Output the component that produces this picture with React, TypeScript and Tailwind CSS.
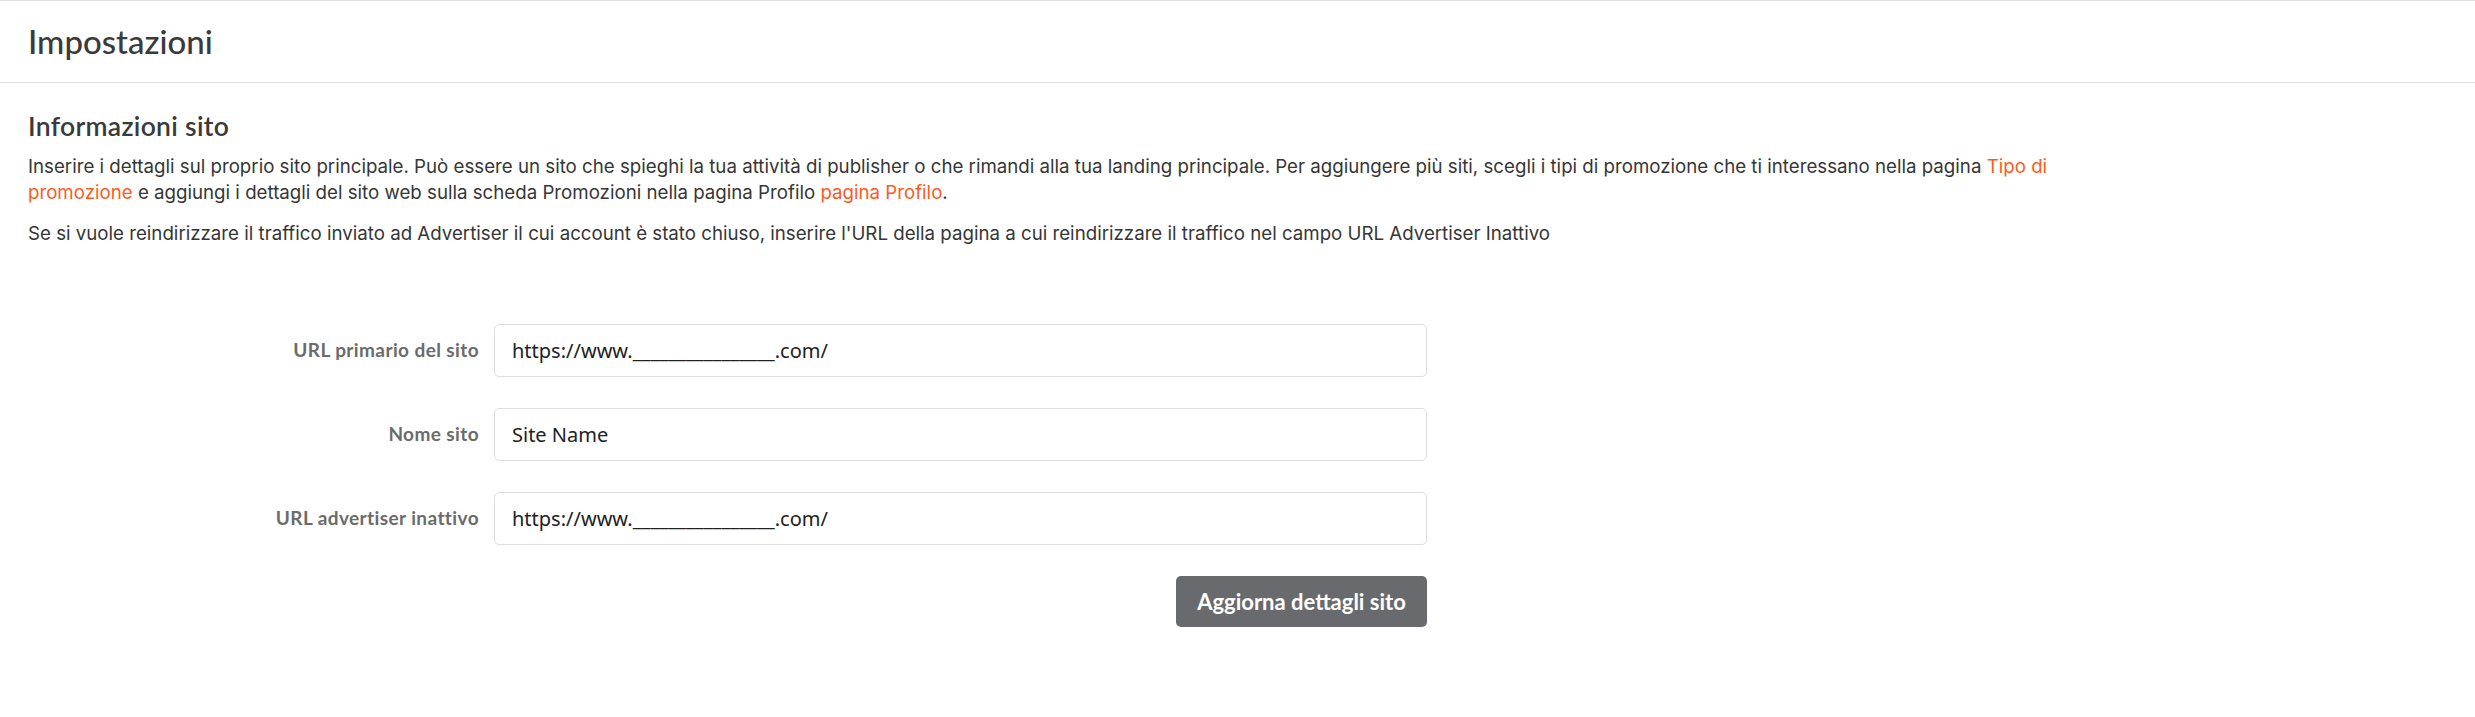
import React from "react";

const inputCls =
  "box-border h-[53px] rounded-[5px] border border-[#dedede] bg-white pl-[17px] flex items-center text-[20px] text-[#222] font-['Noto_Sans',sans-serif]";
const labelCls = "text-right text-[19px] tracking-[0.4px] font-bold text-[#6b6b6b]";

export default function App() {
  return (
    <div className="w-full min-h-[717px] bg-white font-['Lato','Open_Sans',sans-serif] text-[#333]">
      <div className="box-border h-[83px] border-t border-b border-t-[#e3e3e3] border-b-[#dedede] px-[28px] pt-[21px]">
        <h1 className="text-[33px] leading-[38px] font-medium text-[#3a3a3a]">Impostazioni</h1>
      </div>
      <div className="px-[28px] pt-[28px]">
        <h2 className="text-[26.5px] leading-[30px] tracking-[0.3px] font-semibold text-[#3a3a3a]">Informazioni sito</h2>
        <div className="font-['Inter',sans-serif] text-[18.7px] leading-[26px] text-[#363636]">
          <p className="mt-[13px] max-w-[2060px]">
            Inserire i dettagli sul proprio sito principale. Può essere un sito che spieghi la tua attività di publisher o che rimandi alla tua landing principale. Per aggiungere più siti, scegli i tipi di promozione che ti interessano nella pagina{" "}
            <a className="text-[#ff5a1e]">Tipo di promozione</a> e aggiungi i dettagli del sito web sulla scheda Promozioni nella pagina Profilo{" "}
            <a className="text-[#ff5a1e]">pagina Profilo</a>.
          </p>
          <p className="mt-[15px]">
            Se si vuole reindirizzare il traffico inviato ad Advertiser il cui account è stato chiuso, inserire l'URL della pagina a cui reindirizzare il traffico nel campo URL Advertiser Inattivo
          </p>
        </div>

        <div className="mt-[77px] grid grid-cols-[451px_933px] gap-x-[15px] gap-y-[31px] items-center">
          <label className={labelCls}>URL primario del sito</label>
          <div className={inputCls}>https://www.________________.com/</div>
          <label className={labelCls}>Nome sito</label>
          <div className={inputCls}>Site Name</div>
          <label className={labelCls}>URL advertiser inattivo</label>
          <div className={inputCls}>https://www.________________.com/</div>
          <div></div>
          <div className="flex justify-end">
            <button className="h-[51px] w-[251px] rounded-[5px] bg-[#696a6d] text-[22px] font-bold text-white">
              Aggiorna dettagli sito
            </button>
          </div>
        </div>
      </div>
    </div>
  );
}
